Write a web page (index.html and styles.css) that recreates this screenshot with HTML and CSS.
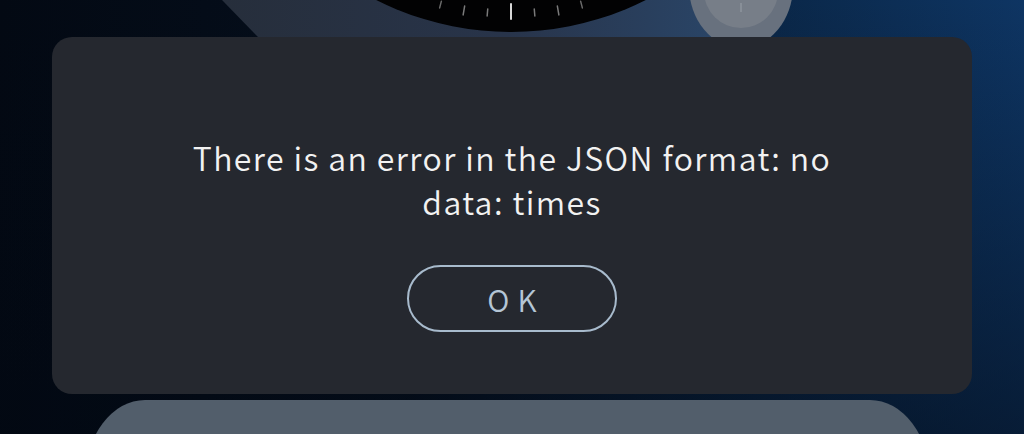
FILE: index.html
```html
<!DOCTYPE html>
<html lang="en">
<head>
    <meta charset="UTF-8">
    <meta name="viewport" content="width=device-width, initial-scale=1.0">
    <title>Error</title>
    <link rel="stylesheet" href="styles.css">
</head>
<body>
    <div class="scene">
        <!-- watch face peeking out above the dialog -->
        <svg class="scene-art" width="1024" height="37" viewBox="0 0 1024 37">
            <defs>
                <linearGradient id="deviceFill" x1="0" y1="0" x2="1" y2="0">
                    <stop offset="0" stop-color="#262e3b"/>
                    <stop offset="0.5" stop-color="#28344a"/>
                    <stop offset="1" stop-color="#2a4a70"/>
                </linearGradient>
            </defs>
            <polygon points="222,0 258,37 760,37 790,0" fill="url(#deviceFill)"/>
            <circle cx="511" cy="-268" r="300" fill="#020203"/>
            <g transform="translate(511 -268)" stroke-linecap="round">
                <line x1="0" y1="272" x2="0" y2="287" stroke="#d8d8d8" stroke-width="2"/>
                <line x1="0" y1="278" x2="0" y2="285" stroke="#7a7a7a" stroke-width="1.5" transform="rotate(4.8)"/>
                <line x1="0" y1="278" x2="0" y2="285" stroke="#7a7a7a" stroke-width="1.5" transform="rotate(-4.8)"/>
                <line x1="0" y1="278" x2="0" y2="287" stroke="#7a7a7a" stroke-width="1.5" transform="rotate(9.6)"/>
                <line x1="0" y1="278" x2="0" y2="287" stroke="#7a7a7a" stroke-width="1.5" transform="rotate(-9.6)"/>
                <line x1="0" y1="278" x2="0" y2="285" stroke="#6a6a6a" stroke-width="1.5" transform="rotate(14.5)"/>
                <line x1="0" y1="278" x2="0" y2="285" stroke="#6a6a6a" stroke-width="1.5" transform="rotate(-14.5)"/>
            </g>
            <ellipse cx="741" cy="-14" rx="52" ry="62" fill="#68717e"/>
            <circle cx="741" cy="-9" r="37" fill="#777e88"/>
            <line x1="741" y1="3" x2="741" y2="12" stroke="#9aa0a8" stroke-width="1"/>
        </svg>
    </div>

    <div class="dialog">
        <p class="message">There is an error in the JSON format: no<br>data: times</p>
        <button class="ok-button">OK</button>
    </div>

    <div class="panel"></div>
</body>
</html>
```

FILE: styles.css
```css
* {
    margin: 0;
    padding: 0;
    box-sizing: border-box;
}

body {
    width: 1024px;
    height: 434px;
    overflow: hidden;
    font-family: 'Noto Sans CJK JP', 'Noto Sans', sans-serif;
    background:
        linear-gradient(180deg, rgba(2, 8, 18, 0) 0%, rgba(2, 8, 18, 0.55) 100%),
        linear-gradient(90deg, #030913 0%, #050f1d 40%, #0a2748 75%, #0e3563 100%);
}

.scene {
    height: 37px;
}

.scene-art {
    display: block;
}

.dialog {
    margin: 0 52px;
    height: 357px;
    background: #25282f;
    border-radius: 20px;
    display: flex;
    flex-direction: column;
    align-items: center;
    padding-top: 98px;
}

.message {
    color: #f2f2f2;
    font-size: 32px;
    font-weight: 350;
    letter-spacing: 1.4px;
    line-height: 44px;
    text-align: center;
}

.ok-button {
    margin-top: 42px;
    width: 210px;
    height: 67px;
    border: 2px solid #a8bbcd;
    border-radius: 34px;
    background: transparent;
    color: #b4c5d5;
    font-family: inherit;
    font-size: 30px;
    font-weight: 350;
    letter-spacing: 8px;
    text-indent: 8px;
}

.panel {
    margin: 6px 94px 0 85px;
    height: 80px;
    background: #525e6b;
    border-radius: 60px 60px 0 0 / 80px 80px 0 0;
}
```
